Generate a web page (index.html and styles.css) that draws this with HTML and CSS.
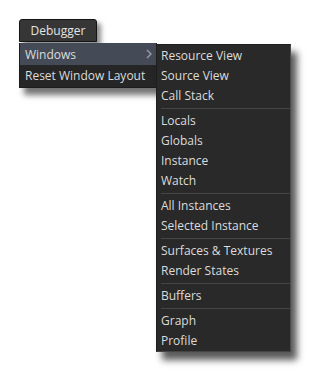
FILE: index.html
```html
<!DOCTYPE html>
<html lang="en">
  <head>
    <meta charset="UTF-8" />
    <title>Debugger menu</title>
    <link rel="stylesheet" href="styles.css">
  </head>
  <body>
    <div class="menubar">
      <button class="menu-title">Debugger</button>
    </div>
    <div class="menus">
      <ul class="menu main">
        <li class="active">
          <span>Windows</span>
          <svg width="6" height="10" viewBox="0 0 6 10" fill="none" stroke="currentColor" stroke-width="1.3">
            <polyline points="1 1 5 5 1 9" />
          </svg>
        </li>
        <li><span>Reset Window Layout</span></li>
      </ul>
      <ul class="menu sub">
        <li>Resource View</li>
        <li>Source View</li>
        <li>Call Stack</li>
        <li class="sep"></li>
        <li>Locals</li>
        <li>Globals</li>
        <li>Instance</li>
        <li>Watch</li>
        <li class="sep"></li>
        <li>All Instances</li>
        <li>Selected Instance</li>
        <li class="sep"></li>
        <li>Surfaces &amp; Textures</li>
        <li>Render States</li>
        <li class="sep"></li>
        <li>Buffers</li>
        <li class="sep"></li>
        <li>Graph</li>
        <li>Profile</li>
      </ul>
    </div>
  </body>
</html>
```

FILE: styles.css
```css
* {
  margin: 0;
  padding: 0;
  box-sizing: border-box;
}

html {
  background-color: #fff;
}

body {
  font-family: "Open Sans", sans-serif;
  font-size: 12px;
  color: #dcdcdc;
  min-height: 372px;
  padding: 19px 0 20px 19px;
}

.menubar {
  display: flex;
}

.menu-title {
  width: 78px;
  height: 23px;
  font-family: inherit;
  font-size: 12px;
  color: #e4e4e4;
  background-color: #363636;
  border: 1px solid #151515;
  border-radius: 3px 3px 0 0;
  box-shadow: 4px 4px 5px rgba(0, 0, 0, 0.45);
}

.menus {
  display: flex;
  align-items: flex-start;
  margin-top: 1px;
}

.menu {
  list-style: none;
  background-color: #262626;
}

.main {
  width: 138px;
  border: 1px solid #1c1c1c;
  border-top: none;
  padding-bottom: 1px;
  box-shadow: 5px 7px 6px rgba(0, 0, 0, 0.55);
}

.main li {
  display: flex;
  align-items: center;
  justify-content: space-between;
  height: 21px;
  padding: 0 4px 0 5px;
  white-space: nowrap;
}

.main li.active {
  height: 22px;
  background-color: #454b56;
}

.main svg {
  color: #9aa0aa;
}

.sub {
  position: relative;
  z-index: 1;
  width: 135px;
  margin-left: -1px;
  margin-top: 1px;
  padding-top: 1px;
  background-color: #292929;
  border: 1px solid #1e1e1e;
  border-right-color: #4a4a4a;
  border-bottom-color: #454545;
  box-shadow: 6px 8px 7px rgba(0, 0, 0, 0.65);
}

.sub li {
  height: 20px;
  line-height: 20px;
  padding-left: 4px;
  white-space: nowrap;
}

.sub li.sep {
  height: 5px;
  display: flex;
  align-items: center;
}

.sub li.sep::after {
  content: "";
  flex: 1;
  height: 1px;
  background-color: #454545;
}
```
